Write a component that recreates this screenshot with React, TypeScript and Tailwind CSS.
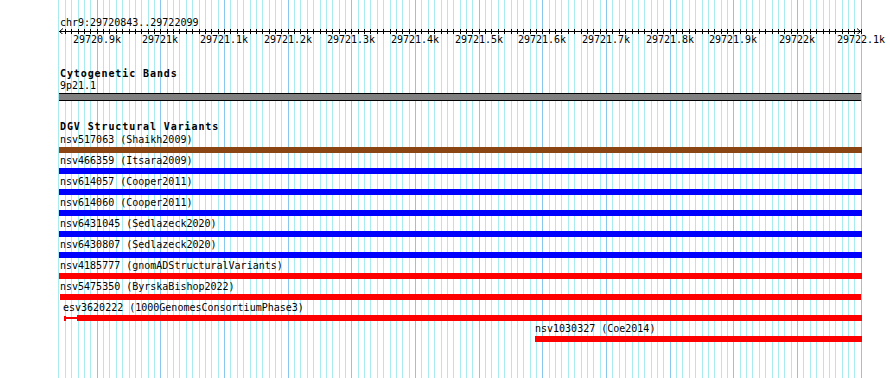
const ORIGIN = 59;
const px = (bp: number) => Math.floor(96.7 + (bp - 29720900) * 0.63667 + 0.5);

const gridlines: { x: number; major: boolean }[] = [];
for (let bp = 29720840; bp <= 29722100; bp += 10) {
  gridlines.push({ x: px(bp), major: bp % 100 === 0 });
}

const rulerLabels: { x: number; text: string }[] = [];
for (let bp = 29720900; bp <= 29722100; bp += 100) {
  rulerLabels.push({
    x: px(bp),
    text: (bp / 1000).toFixed(1).replace(/\.0$/, "") + "k",
  });
}

type Variant = {
  name: string;
  left: number;
  right: number;
  color: string;
  labelLeft?: number;
  truncated?: boolean;
};

const variants: Variant[] = [
  { name: "nsv517063 (Shaikh2009)", left: 59, right: 862, color: "#8b4513" },
  { name: "nsv466359 (Itsara2009)", left: 59, right: 862, color: "#0000ff" },
  { name: "nsv614057 (Cooper2011)", left: 59, right: 862, color: "#0000ff" },
  { name: "nsv614060 (Cooper2011)", left: 59, right: 862, color: "#0000ff" },
  { name: "nsv6431045 (Sedlazeck2020)", left: 59, right: 862, color: "#0000ff" },
  { name: "nsv6430807 (Sedlazeck2020)", left: 59, right: 862, color: "#0000ff" },
  { name: "nsv4185777 (gnomADStructuralVariants)", left: 59, right: 862, color: "#ff0000" },
  { name: "nsv5475350 (ByrskaBishop2022)", left: 60, right: 861, color: "#ff0000" },
  {
    name: "esv3620222 (1000GenomesConsortiumPhase3)",
    left: 64,
    right: 862,
    color: "#ff0000",
    labelLeft: 63,
    truncated: true,
  },
  { name: "nsv1030327 (Coe2014)", left: 535, right: 862, color: "#ff0000", labelLeft: 535 },
];

function Ruler() {
  const w = 803;
  return (
    <div className="h-[45px] pt-[17px]">
      <div className="h-[10px] leading-[11px] pl-[1px]">chr9:29720843..29722099</div>
      <svg width={w} height={7} className="block" shapeRendering="crispEdges">
        <line x1={0} y1={4.5} x2={w - 1} y2={4.5} stroke="#000" strokeWidth={1} />
        {gridlines.map((g) => (
          <line
            key={g.x}
            x1={g.x - ORIGIN + 0.5}
            y1={2}
            x2={g.x - ORIGIN + 0.5}
            y2={7}
            stroke="#000"
            strokeWidth={1}
          />
        ))}
        <polyline points="4,1.5 0.5,4.5 4,7.5" fill="none" stroke="#000" strokeWidth={1} shapeRendering="auto" />
        <polyline
          points={`${w - 5},1.5 ${w - 1.5},4.5 ${w - 5},7.5`}
          fill="none"
          stroke="#000"
          strokeWidth={1}
          shapeRendering="auto"
        />
      </svg>
      <div className="relative h-[11px] leading-[11px]">
        {rulerLabels.map((l) => (
          <span
            key={l.text}
            className="absolute top-0 -translate-x-1/2 whitespace-nowrap"
            style={{ left: l.x - ORIGIN }}
          >
            {l.text}
          </span>
        ))}
      </div>
    </div>
  );
}

function TrackTitle({ children }: { children: string }) {
  return (
    <div className="h-[12px] leading-[12px] text-[10px] font-bold tracking-[0.9px] whitespace-nowrap pl-[1px]">
      {children}
    </div>
  );
}

function VariantRow({ v }: { v: Variant }) {
  return (
    <div className="h-[21px]">
      <div
        className="h-[11px] leading-[11px] whitespace-nowrap"
        style={{ marginLeft: (v.labelLeft ?? 60) - ORIGIN }}
      >
        {v.name}
      </div>
      {v.truncated ? (
        <div
          className="mt-[2px] h-[6px] flex items-center"
          style={{ marginLeft: v.left - ORIGIN, width: v.right - v.left }}
        >
          <div className="w-[2px] h-[5px] bg-[#ff0000]" />
          <div className="w-[11px] h-[2px] bg-[#ff0000]" />
          <div className="flex-1 h-[6px] bg-[#ff0000]" />
        </div>
      ) : (
        <div
          className="mt-[2px] h-[6px]"
          style={{ marginLeft: v.left - ORIGIN, width: v.right - v.left, backgroundColor: v.color }}
        />
      )}
    </div>
  );
}

export default function App() {
  return (
    <div className="relative w-[890px] h-[378px] overflow-hidden bg-white text-black font-['DejaVu_Sans_Mono',monospace] text-[10px]">
      <div className="absolute inset-0">
        {gridlines.map((g) => (
          <div
            key={g.x}
            className={`absolute top-0 bottom-0 w-[1px] ${g.major ? "bg-[#88c8ec]" : "bg-[#a8ecf0]"}`}
            style={{ left: g.x }}
          />
        ))}
      </div>

      <div className="relative ml-[59px] w-[803px]">
        <Ruler />

        <div className="mt-[23px]">
          <TrackTitle>Cytogenetic Bands</TrackTitle>
          <div className="h-[11px] leading-[11px] pl-[1px]">9p21.1</div>
          <div className="mt-[2px] h-[8px] w-[802px] bg-[#808080] border-y border-black" />
        </div>

        <div className="mt-[20px]">
          <TrackTitle>DGV Structural Variants</TrackTitle>
          <div className="mt-[1px]">
            {variants.map((v) => (
              <VariantRow key={v.name} v={v} />
            ))}
          </div>
        </div>
      </div>
    </div>
  );
}
